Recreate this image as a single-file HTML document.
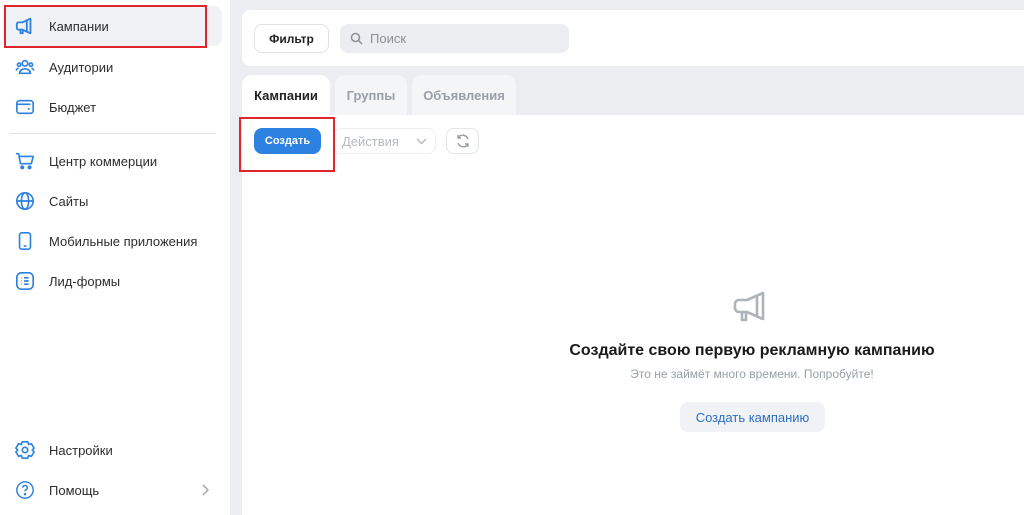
<!DOCTYPE html>
<html><head><meta charset="utf-8"><style>
*{box-sizing:border-box;margin:0;padding:0}
body{width:1024px;height:515px;overflow:hidden;background:#ebedf0;font-family:"Liberation Sans","DejaVu Sans",sans-serif;position:relative;color:#222}
.side{position:absolute;left:0;top:0;width:230px;height:515px;background:#fff}
.item{position:absolute;left:3px;width:219px;height:40px;display:flex;align-items:center;font-size:13px;color:#2c2d2e}
.item svg{position:absolute;left:12px;top:10px}
.item span{position:absolute;left:46px}
.active{background:#f0f2f5;border-radius:8px}
.sep{position:absolute;left:10px;width:206px;top:133px;height:1px;background:#e1e3e6}
.red{position:absolute;border:2px solid #e0262b}
.card{position:absolute;left:242px;top:10px;width:790px;height:56px;background:#fff;border-radius:8px}
.btn{position:absolute;border:1px solid #dfe1e5;border-radius:8px;background:#fff;font-size:12px;font-weight:bold;display:flex;align-items:center;justify-content:center}
.search{position:absolute;left:340px;top:24px;width:229px;height:29px;background:#ebedf0;border-radius:8px;font-size:13px;color:#8c9096;display:flex;align-items:center;padding-left:30px}
.tab{position:absolute;top:75px;height:40px;border-radius:10px 10px 0 0;background:#f4f5f7;font-size:13px;font-weight:bold;color:#99a0a8;display:flex;align-items:center;justify-content:center}
.content{position:absolute;left:242px;top:115px;width:782px;height:400px;background:#fff}
</style></head><body>
<div class="side">
 <div class="item active" style="top:6px"><svg width="20" height="20" viewBox="0 0 22 22" fill="none" stroke="#2d81e0" stroke-width="2" stroke-linejoin="round" stroke-linecap="round"><path d="M4 7h4l9-4v16l-9-4H4a2 2 0 0 1-2-2V9a2 2 0 0 1 2-2z"/><path d="M6 15v4h2.5v-4"/><path d="M13 5v12"/></svg><span>Кампании</span></div>
 <div class="item" style="top:47px"><svg width="20" height="20" viewBox="0 0 22 22" fill="none" stroke="#2d81e0" stroke-width="1.8"><circle cx="11" cy="7" r="3"/><path d="M5 18c0-3 3-5 6-5s6 2 6 5z"/><circle cx="4.5" cy="8.5" r="1.8"/><circle cx="17.5" cy="8.5" r="1.8"/><path d="M1.5 15c0-1.5 1-2.5 2.5-2.5M20.5 15c0-1.5-1-2.5-2.5-2.5"/></svg><span>Аудитории</span></div>
 <div class="item" style="top:87px"><svg width="20" height="20" viewBox="0 0 22 22" fill="none" stroke="#2d81e0" stroke-width="1.8"><rect x="2" y="4" width="18" height="14" rx="3"/><path d="M2 8h15" /><path d="M14 13h2"/></svg><span>Бюджет</span></div>
 <div class="sep"></div>
 <div class="item" style="top:141px"><svg width="20" height="20" viewBox="0 0 22 22" fill="none" stroke="#2d81e0" stroke-width="1.8" stroke-linejoin="round"><path d="M1 3h3l2 11h12l2-8H5"/><circle cx="8" cy="18" r="1.3" fill="#2d81e0"/><circle cx="16" cy="18" r="1.3" fill="#2d81e0"/></svg><span>Центр коммерции</span></div>
 <div class="item" style="top:181px"><svg width="20" height="20" viewBox="0 0 22 22" fill="none" stroke="#2d81e0" stroke-width="1.8"><circle cx="11" cy="11" r="9"/><ellipse cx="11" cy="11" rx="4" ry="9"/><path d="M2 11h18"/></svg><span>Сайты</span></div>
 <div class="item" style="top:221px"><svg width="20" height="20" viewBox="0 0 22 22" fill="none" stroke="#2d81e0" stroke-width="1.8"><rect x="5" y="2" width="12" height="18" rx="2.5"/><path d="M9.5 16.5h3"/></svg><span>Мобильные приложения</span></div>
 <div class="item" style="top:261px"><svg width="20" height="20" viewBox="0 0 22 22" fill="none" stroke="#2d81e0" stroke-width="1.8"><rect x="2" y="2" width="18" height="18" rx="5"/><path d="M7 7.5h.5M7 11h.5M7 14.5h.5M10 7.5h5M10 11h5M10 14.5h5"/></svg><span>Лид-формы</span></div>
 <div class="item" style="top:430px"><svg width="20" height="20" viewBox="0 0 22 22" fill="none" stroke="#2d81e0" stroke-width="1.8" stroke-linejoin="round"><path d="M8 2h6l1 3 3-1 3 5-2 2 2 2-3 5-3-1-1 3H8l-1-3-3 1-3-5 2-2-2-2 3-5 3 1z"/><circle cx="11" cy="11" r="3"/></svg><span>Настройки</span></div>
 <div class="item" style="top:470px"><svg width="20" height="20" viewBox="0 0 22 22" fill="none" stroke="#2d81e0" stroke-width="1.6"><circle cx="11" cy="11" r="9"/><path d="M8.5 8.5a2.5 2.5 0 1 1 3.5 2.3c-.7.4-1 .8-1 1.7"/><circle cx="11" cy="15.5" r=".6" fill="#2d81e0"/></svg><span>Помощь</span><svg style="left:198px;top:14px" width="8" height="12" viewBox="0 0 8 12" fill="none" stroke="#a3a8ae" stroke-width="1.5"><path d="M2 1l5 5-5 5"/></svg></div>
</div>
<div class="red" style="left:4px;top:5px;width:203px;height:43px"></div>

<div class="card"></div>
<div class="btn" style="left:254px;top:24px;width:75px;height:29px">Фильтр</div>
<div class="search"><svg style="position:absolute;left:10px;top:8px" width="13" height="13" viewBox="0 0 13 13" fill="none" stroke="#8c9096" stroke-width="1.5"><circle cx="5.5" cy="5.5" r="4"/><path d="M8.5 8.5l3.5 3.5"/></svg>Поиск</div>

<div class="tab" style="left:242px;width:88px;background:#fff;color:#222">Кампании</div>
<div class="tab" style="left:335px;width:72px">Группы</div>
<div class="tab" style="left:412px;width:104px">Объявления</div>

<div class="content"></div>
<div class="btn" style="left:254px;top:128px;width:67px;height:26px;background:#2d81e0;border-color:#2d81e0;color:#fff;font-size:11px">Создать</div>
<div class="btn" style="left:333px;top:128px;width:103px;height:26px;border-color:#eceef1;font-weight:normal;color:#b5b9bf;font-size:13px;justify-content:flex-start;padding-left:8px">Действия<svg style="position:absolute;right:8px;top:9px" width="11" height="7" viewBox="0 0 11 7" fill="none" stroke="#b5b9bf" stroke-width="1.4"><path d="M1 1l4.5 4.5L10 1"/></svg></div>
<div class="btn" style="left:446px;top:128px;width:33px;height:26px;border-color:#e3e5e8"><svg width="16" height="16" viewBox="0 0 16 16" fill="none" stroke="#9aa0a7" stroke-width="1.4"><path d="M13 6A5.5 5.5 0 0 0 3 5M3 10a5.5 5.5 0 0 0 10 1"/><path d="M3 2v3h3M13 14v-3h-3"/></svg></div>
<div class="red" style="left:239px;top:117px;width:96px;height:55px"></div>

<svg style="position:absolute;left:733px;top:290px" width="38" height="36" viewBox="0 0 38 36" fill="none" stroke="#aeb3ba" stroke-width="2.6" stroke-linejoin="round" stroke-linecap="round"><path d="M6 10h8l16-7v26l-16-7H6a4 4 0 0 1-4-4v-4a4 4 0 0 1 4-4z"/><path d="M9 22v8h4v-8"/><path d="M24 6v20"/></svg>
<div style="position:absolute;left:542px;top:342px;width:420px;text-align:center;font-size:16px;font-weight:bold;color:#1a1a1a">Создайте свою первую рекламную кампанию</div>
<div style="position:absolute;left:542px;top:367px;width:420px;text-align:center;font-size:12px;color:#99a0a8">Это не займёт много времени. Попробуйте!</div>
<div style="position:absolute;left:680px;top:402px;width:145px;height:30px;background:#f0f2f5;border-radius:8px;font-size:13px;color:#2d6fc2;display:flex;align-items:center;justify-content:center">Создать кампанию</div>
</body></html>
